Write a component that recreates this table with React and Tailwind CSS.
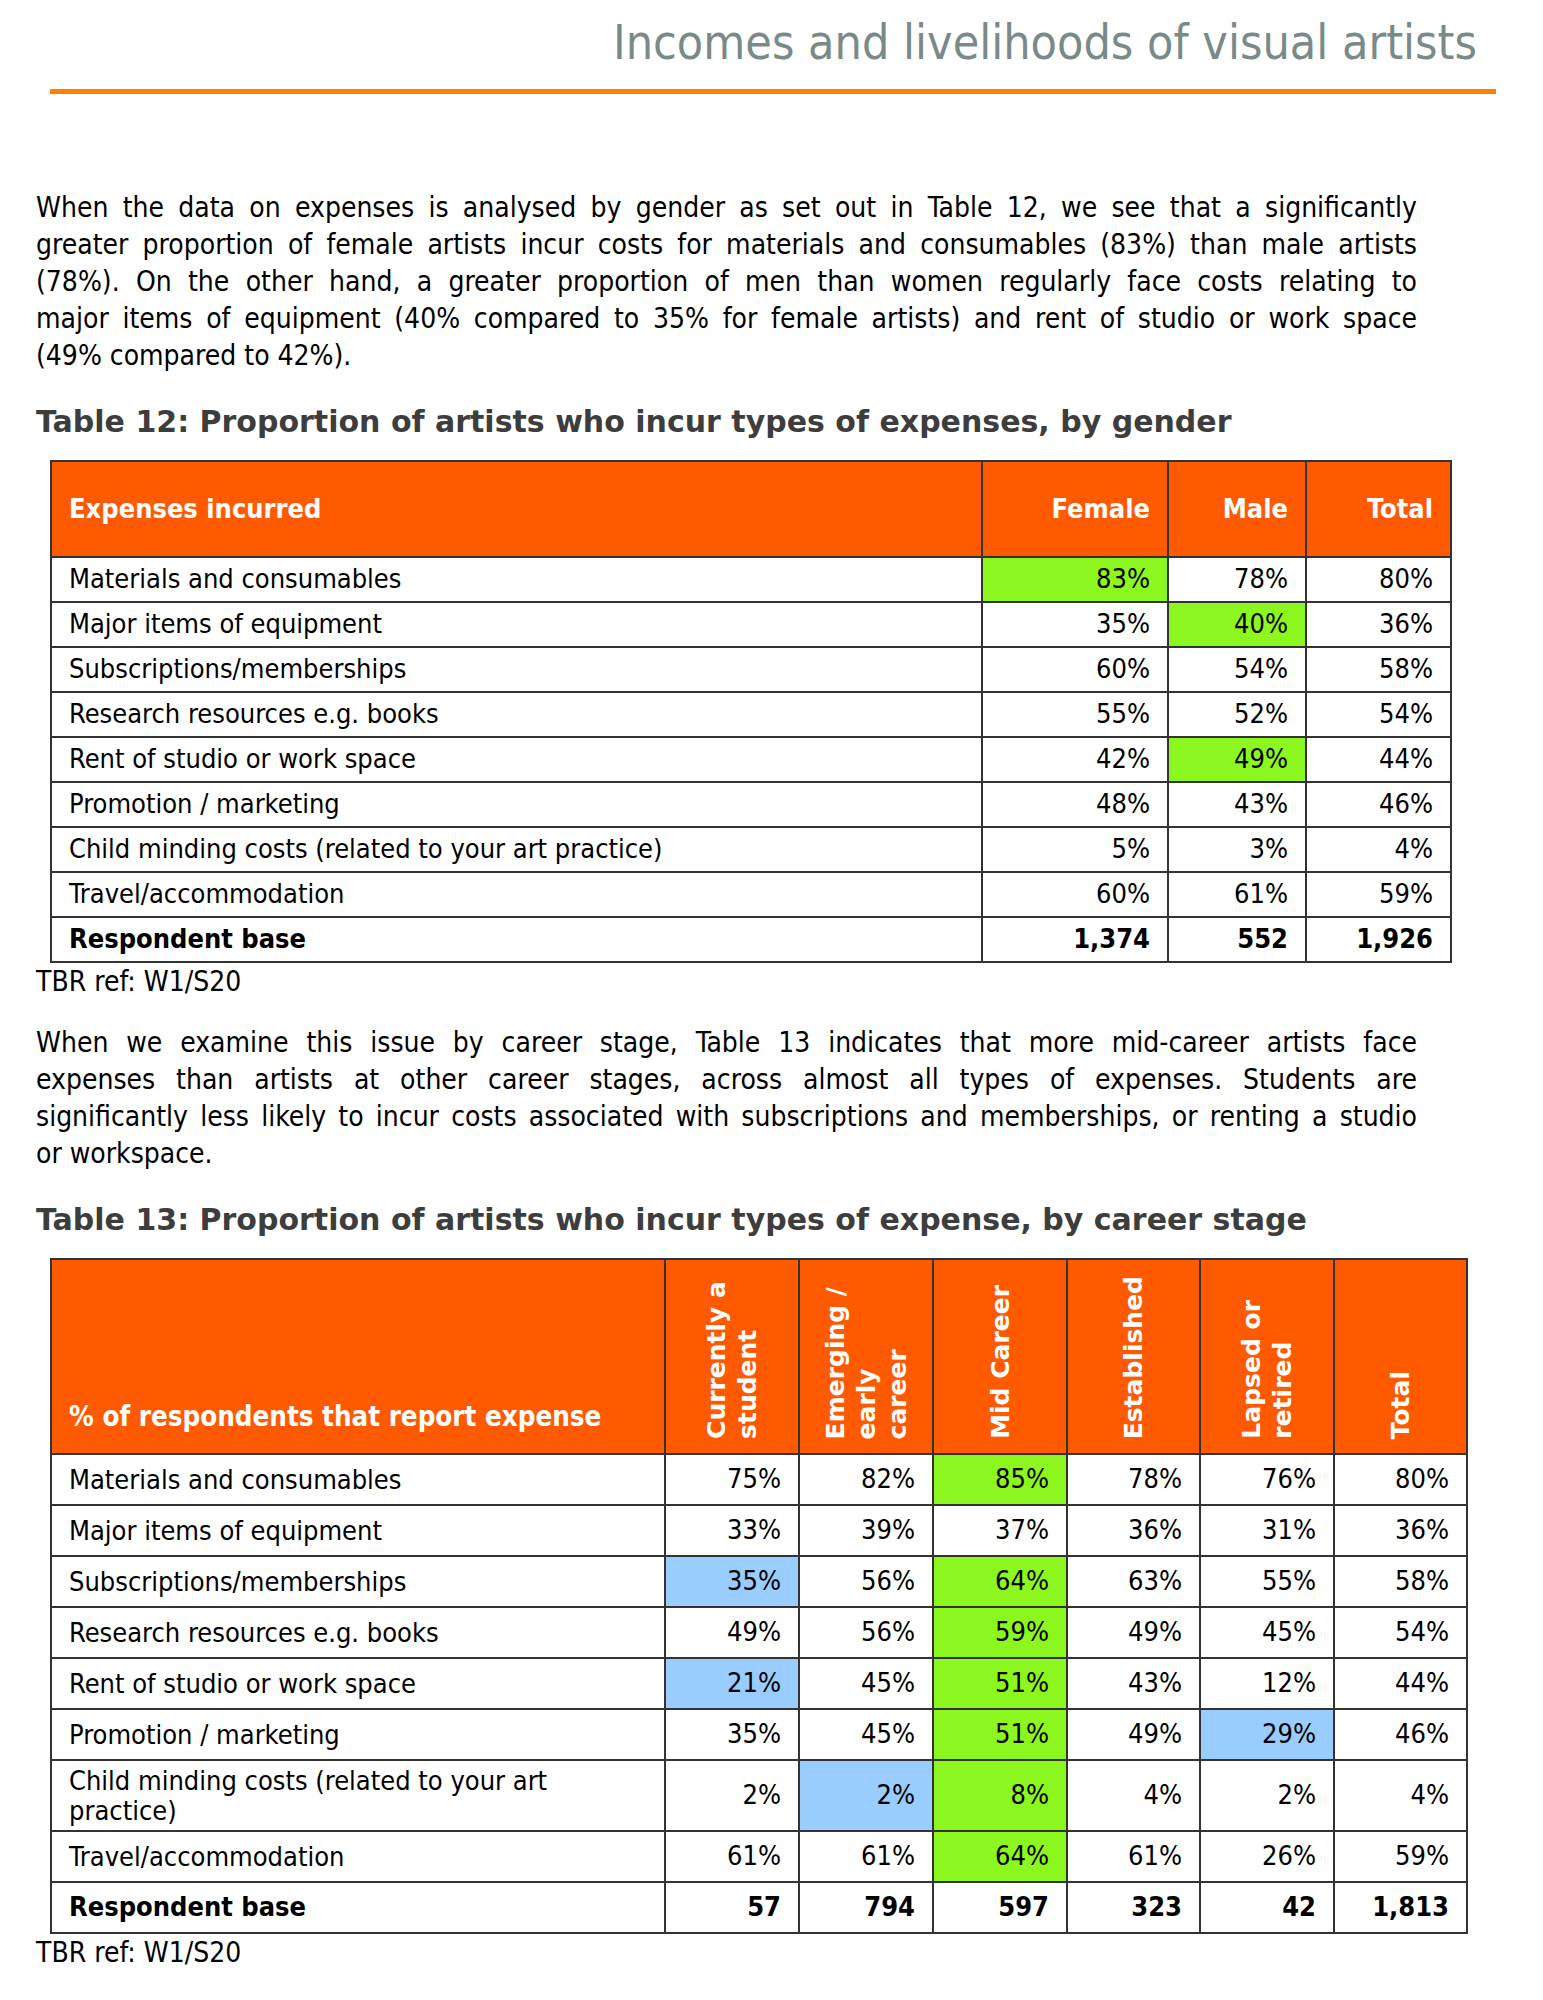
import React from 'react';

const body = { fontFamily: '"DejaVu Sans Condensed", "Liberation Sans", sans-serif' };
const wide = { fontFamily: '"DejaVu Sans", "Liberation Sans", sans-serif' };

const para1 = [
  'When the data on expenses is analysed by gender as set out in Table 12, we see that a significantly',
  'greater proportion of female artists incur costs for materials and consumables (83%) than male artists',
  '(78%). On the other hand, a greater proportion of men than women regularly face costs relating to',
  'major items of equipment (40% compared to 35% for female artists) and rent of studio or work space',
  '(49% compared to 42%).',
];

const para2 = [
  'When we examine this issue by career stage, Table 13 indicates that more mid-career artists face',
  'expenses than artists at other career stages, across almost all types of expenses.  Students are',
  'significantly less likely to incur costs associated with subscriptions and memberships, or renting a studio',
  'or workspace.',
];

// g = green highlight, b = blue highlight
const table12 = [
  ['Materials and consumables', ['83%', 'g'], '78%', '80%'],
  ['Major items of equipment', '35%', ['40%', 'g'], '36%'],
  ['Subscriptions/memberships', '60%', '54%', '58%'],
  ['Research resources e.g. books', '55%', '52%', '54%'],
  ['Rent of studio or work space', '42%', ['49%', 'g'], '44%'],
  ['Promotion / marketing', '48%', '43%', '46%'],
  ['Child minding costs (related to your art practice)', '5%', '3%', '4%'],
  ['Travel/accommodation', '60%', '61%', '59%'],
];

const table13 = [
  ['Materials and consumables', '75%', '82%', ['85%', 'g'], '78%', '76%', '80%'],
  ['Major items of equipment', '33%', '39%', '37%', '36%', '31%', '36%'],
  ['Subscriptions/memberships', ['35%', 'b'], '56%', ['64%', 'g'], '63%', '55%', '58%'],
  ['Research resources e.g. books', '49%', '56%', ['59%', 'g'], '49%', '45%', '54%'],
  ['Rent of studio or work space', ['21%', 'b'], '45%', ['51%', 'g'], '43%', '12%', '44%'],
  ['Promotion / marketing', '35%', '45%', ['51%', 'g'], '49%', ['29%', 'b'], '46%'],
  ['Child minding costs (related to your art practice)', '2%', ['2%', 'b'], ['8%', 'g'], '4%', '2%', '4%'],
  ['Travel/accommodation', '61%', '61%', ['64%', 'g'], '61%', '26%', '59%'],
];

const stages = [
  ['Currently a', 'student'],
  ['Emerging /', 'early', 'career'],
  ['Mid Career'],
  ['Established'],
  ['Lapsed or', 'retired'],
  ['Total'],
];

function Justified({ lines }) {
  return (
    <div className="w-[1381px] text-[28px] leading-[37px] text-black" style={body}>
      {lines.map((line, i) => (
        <div
          key={i}
          className={
            i < lines.length - 1
              ? 'whitespace-nowrap text-justify [text-align-last:justify]'
              : 'text-left'
          }
        >
          {line}
        </div>
      ))}
    </div>
  );
}

function Value({ v }) {
  const text = Array.isArray(v) ? v[0] : v;
  const tone = Array.isArray(v) ? v[1] : null;
  const bg = tone === 'g' ? 'bg-[#8cf71f]' : tone === 'b' ? 'bg-[#99ccff]' : 'bg-white';
  return <td className={`border-2 border-[#333] pr-[17px] text-right ${bg}`}>{text}</td>;
}

function Table12() {
  return (
    <table className="ml-[14px] w-[1400px] table-fixed border-collapse text-[27px] text-black" style={body}>
      <colgroup>
        <col className="w-[931px]" />
        <col className="w-[186px]" />
        <col className="w-[138px]" />
        <col className="w-[145px]" />
      </colgroup>
      <thead>
        <tr className="h-[96px] bg-[#ff5a00] font-bold text-white">
          <th className="border-2 border-[#333] pl-[17px] text-left">Expenses incurred</th>
          <th className="border-2 border-[#333] pr-[17px] text-right">Female</th>
          <th className="border-2 border-[#333] pr-[17px] text-right">Male</th>
          <th className="border-2 border-[#333] pr-[17px] text-right">Total</th>
        </tr>
      </thead>
      <tbody>
        {table12.map((row) => (
          <tr key={row[0]} className="h-[45px]">
            <td className="border-2 border-[#333] pl-[17px]">{row[0]}</td>
            {row.slice(1).map((v, i) => (
              <Value key={i} v={v} />
            ))}
          </tr>
        ))}
        <tr className="h-[45px] font-bold">
          <td className="border-2 border-[#333] pl-[17px]">Respondent base</td>
          <td className="border-2 border-[#333] pr-[17px] text-right">1,374</td>
          <td className="border-2 border-[#333] pr-[17px] text-right">552</td>
          <td className="border-2 border-[#333] pr-[17px] text-right">1,926</td>
        </tr>
      </tbody>
    </table>
  );
}

function Table13() {
  return (
    <table className="ml-[14px] w-[1416px] table-fixed border-collapse text-[27px] text-black" style={body}>
      <colgroup>
        <col className="w-[614px]" />
        <col className="w-[134px]" />
        <col className="w-[134px]" />
        <col className="w-[134px]" />
        <col className="w-[133px]" />
        <col className="w-[134px]" />
        <col className="w-[133px]" />
      </colgroup>
      <thead>
        <tr className="h-[195px] bg-[#ff5a00] font-bold text-white">
          <th className="border-2 border-[#333] pb-[16px] pl-[17px] text-left align-bottom text-[27.5px]">
            % of respondents that report expense
          </th>
          {stages.map((lines) => (
            <th key={lines[0]} className="border-2 border-[#333] p-0 align-bottom">
              <div className="flex justify-center pb-[14px]">
                <div
                  className="rotate-180 text-left text-[25px] leading-[31px] [writing-mode:vertical-rl]"
                  style={wide}
                >
                  {lines.map((l) => (
                    <div key={l}>{l}</div>
                  ))}
                </div>
              </div>
            </th>
          ))}
        </tr>
      </thead>
      <tbody>
        {table13.map((row) => {
          const tall = row[0].startsWith('Child');
          return (
            <tr key={row[0]} className={tall ? 'h-[71px]' : 'h-[51px]'}>
              <td className="border-2 border-[#333] pl-[17px] leading-[30px]">
                {tall ? (
                  <>
                    Child minding costs (related to your art
                    <br />
                    practice)
                  </>
                ) : (
                  row[0]
                )}
              </td>
              {row.slice(1).map((v, i) => (
                <Value key={i} v={v} />
              ))}
            </tr>
          );
        })}
        <tr className="h-[51px] font-bold">
          <td className="border-2 border-[#333] pl-[17px]">Respondent base</td>
          {['57', '794', '597', '323', '42', '1,813'].map((v) => (
            <td key={v} className="border-2 border-[#333] pr-[17px] text-right">
              {v}
            </td>
          ))}
        </tr>
      </tbody>
    </table>
  );
}

export default function App() {
  return (
    <div className="min-h-[2000px] w-[1543px] bg-white">
      <header className="px-[50px] pt-[10px]">
        <h1 className="pr-[16px] text-right text-[48px] leading-[64px] text-[#798a88]" style={body}>
          Incomes and livelihoods of visual artists
        </h1>
        <div className="mt-[15px] h-[5px] w-[1446px] bg-[#ff8000]" />
      </header>

      <main className="pl-[36px] pt-[95px]">
        <Justified lines={para1} />

        <h2 className="mt-[29px] text-[30px] font-bold leading-[37px] text-[#3d3d3d]" style={wide}>
          Table 12: Proportion of artists who incur types of expenses, by gender
        </h2>

        <div className="mt-[20px]">
          <Table12 />
        </div>
        <p className="text-[28px] leading-[37px] text-black" style={body}>TBR ref: W1/S20</p>

        <div className="mt-[24px]">
          <Justified lines={para2} />
        </div>

        <h2 className="mt-[29px] text-[30px] font-bold leading-[37px] text-[#3d3d3d]" style={wide}>
          Table 13: Proportion of artists who incur types of expense, by career stage
        </h2>

        <div className="mt-[20px]">
          <Table13 />
        </div>
        <p className="text-[28px] leading-[37px] text-black" style={body}>TBR ref: W1/S20</p>
      </main>
    </div>
  );
}
